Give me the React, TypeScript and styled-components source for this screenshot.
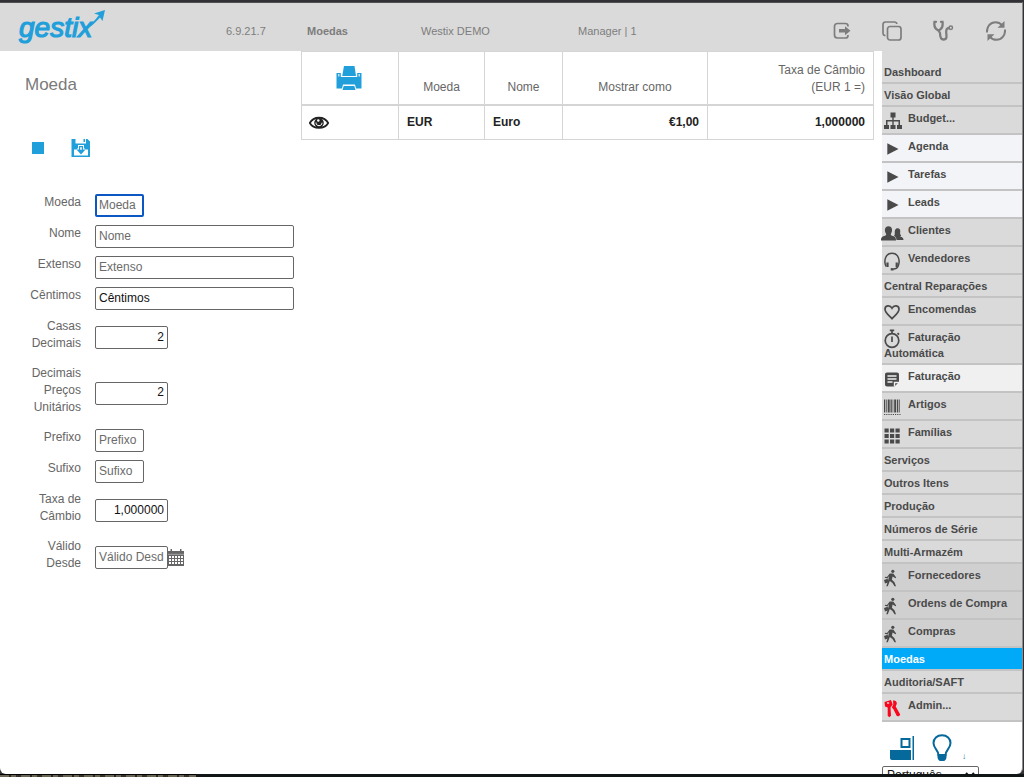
import React from "react";
import styled, { createGlobalStyle, css } from "styled-components";

const blue = "#209fda";
const line = "#d5d5d5";
const grey = "#dadada";
const ink = "#4a4a4a";

const GlobalStyle = createGlobalStyle`
  * { box-sizing: border-box; }
  body {
    margin: 0;
    background: #101212;
    font: 12px/17px "Liberation Sans", Arial, sans-serif;
    color: #666;
  }
`;

const Desktop = styled.div`
  display: flex;
  flex-direction: column;
  height: 100vh;
  padding-top: 2px;
  background: #323236;
`;

const WindowFrame = styled.div`
  flex: 1;
  min-height: 0;
  display: flex;
  flex-direction: column;
  overflow: hidden;
  background: #fff;
  border-top: 1px solid #505054;
  border-right: 1px solid #8c8c8c;
  margin-right: 1px;
  border-radius: 0 0 6px 6px;
`;

const Backdrop = styled.div`
  height: 3px;
  background: #121515;
  &::before {
    content: "";
    display: block;
    width: 196px;
    height: 3px;
    border-top: 1px solid #000;
    background: repeating-linear-gradient(90deg, #6a6653 0 9px, #2a2a22 9px 11px, #6a6653 11px 16px, #33322a 16px 21px);
  }
`;

const Header = styled.header`
  flex: none;
  height: 48px;
  display: grid;
  grid-template-columns: 226px 81px 114px 157px 1fr auto;
  align-items: center;
  padding-right: 16px;
  background: ${grey};
  color: #7d7d7d;
  font-size: 11px;
`;

const LogoLink = styled.a`
  display: block;
  height: 48px;
  padding-left: 16px;
`;

const HeaderText = styled.span<{ $strong?: boolean }>`
  padding-top: 8px;
  font-weight: ${(p) => (p.$strong ? 700 : 400)};
`;

const HeaderActions = styled.div`
  display: flex;
  gap: 31px;
  padding-top: 8px;
`;

const IconButton = styled.button`
  display: block;
  border: 0;
  padding: 0;
  background: none;
  color: inherit;
  svg { display: block; }
`;

const Body = styled.div`
  flex: 1;
  min-height: 0;
  display: grid;
  grid-template-columns: 301px minmax(0, 1fr) 140px;
`;

const FormPane = styled.section`
  padding: 23px 0 0 25px;
`;

const Title = styled.h1`
  margin: 0;
  font-size: 17px;
  line-height: 22px;
  font-weight: 400;
  color: #7a7a7a;
`;

const Toolbar = styled.div`
  display: flex;
  align-items: center;
  gap: 26px;
  height: 24px;
  margin: 40px 0 30px;
  padding-left: 6px;
  color: ${blue};
`;

const FormRow = styled.div`
  display: grid;
  grid-template-columns: 56px auto 1fr;
  align-items: center;
  min-height: 31px;
`;

const Label = styled.label`
  align-self: start;
  padding: 4px 0 9px;
  text-align: right;
`;

type FieldSize = "small" | "medium" | "wide";
const fieldWidth: Record<FieldSize, number> = { small: 49, medium: 73, wide: 199 };

const Field = styled.input<{ $size: FieldSize; $end?: boolean }>`
  width: ${(p) => fieldWidth[p.$size]}px;
  height: 23px;
  margin-left: 14px;
  padding: 0 3px 2px;
  border: 1px solid #666;
  border-radius: 2px;
  background: #fff;
  color: #111;
  font: inherit;
  text-align: ${(p) => (p.$end ? "right" : "left")};
  &::placeholder { color: #6b6b6b; opacity: 1; }
  &:focus {
    outline: 0;
    padding: 0 2px 2px;
    border: 2px solid #0b57c4;
    caret-color: transparent;
  }
`;

const TablePane = styled.section`
  padding-right: 8px;
`;

const Table = styled.table`
  width: 100%;
  table-layout: fixed;
  border-spacing: 0;
  border-top: 1px solid ${line};
  border-left: 1px solid ${line};
`;

const cell = css<{ $end?: boolean }>`
  border-right: 1px solid ${line};
  border-bottom: 1px solid ${line};
  text-align: ${(p) => (p.$end ? "right" : "left")};
`;

const HeadCell = styled.th<{ $end?: boolean }>`
  ${cell}
  height: 54px;
  padding: 10px 8px 8px;
  border-bottom-width: 2px;
  vertical-align: bottom;
  font-weight: 400;
  text-align: ${(p) => (p.$end ? "right" : "center")};
`;

const PrintCell = styled(HeadCell)`
  padding: 0 11px 0 8px;
  vertical-align: middle;
  button { margin: 0 auto; color: ${blue}; }
`;

const DataCell = styled.td<{ $end?: boolean }>`
  ${cell}
  height: 34px;
  padding: 0 8px;
  color: #222;
  font-weight: 700;
`;

const EyeCell = styled(DataCell)`
  padding: 0 7px;
`;

const Sidebar = styled.aside`
  min-width: 0;
`;

const Menu = styled.ul`
  margin: 0;
  padding: 10px 0 0;
  list-style: none;
  background: ${grey};
`;

type Tone = "plain" | "pale" | "light" | "dark" | "active";
const toneColor: Record<Tone, string> = {
  plain: grey,
  pale: "#f3f4f7",
  light: "#f0f0f0",
  dark: "#d0d0d0",
  active: "#00aaf9",
};

const MenuLink = styled.a<{ $tone: Tone; $tall: boolean }>`
  display: block;
  min-height: ${(p) => (p.$tall ? 28 : 23)}px;
  padding: 3px 2px 2px;
  border-bottom: 2px solid #c3c3c3;
  background: ${(p) => toneColor[p.$tone]};
  color: ${(p) => (p.$tone === "active" ? "#fff" : ink)};
  font-size: 11px;
  line-height: 16px;
  font-weight: 700;
  text-decoration: none;
`;

const MenuIcon = styled.span`
  display: inline-block;
  vertical-align: top;
  width: 24px;
  height: 16px;
  svg { display: block; margin-top: 2px; overflow: visible; }
`;

const SideFooter = styled.footer`
  padding-top: 12px;
`;

const FooterTools = styled.div`
  display: flex;
  align-items: center;
  gap: 18px;
  height: 27px;
  margin-bottom: 5px;
  padding-left: 8px;
  color: #06699b;
`;

const FooterNote = styled.span`
  align-self: flex-end;
  margin-left: -8px;
  font-size: 8px;
  line-height: 8px;
`;

const Language = styled.select`
  display: block;
  width: 97px;
  height: 18px;
  padding: 0;
  border: 1px solid #666;
  border-radius: 2px;
  background: #fff;
  color: #111;
  font: inherit;
`;

const Logo = () => (
  <svg width="94" height="48" viewBox="0 0 94 48" role="img" aria-label="gestix">
    <text x="3" y="34" fill={blue} stroke={blue} strokeWidth="1.2" fontFamily="Liberation Sans, Arial, sans-serif" fontSize="28" fontStyle="italic">gestix</text>
    <path d="M68 27C74 23 79 17 83 12l-5-1.500L89 7l-2.500 11-2.500-3.500C79 20 75 24 68 27z" fill={blue} />
  </svg>
);

const LogoutIcon = () => (
  <svg width="18" height="22" viewBox="0 0 18 22" fill="none" stroke="currentColor" strokeWidth="1.7">
    <path d="M15 6.500V6c0-1.500-1-2.500-2.500-2.500h-8C2.500 3.500 1.500 4.500 1.500 6.500v8.500c0 2 1 3 3 3h8c1.500 0 2.500-1 2.500-2.500V15" />
    <path d="M6 9h6V6.300l5.500 4.500-5.500 4.500v-2.700H6z" fill="currentColor" stroke="none" />
  </svg>
);

const CopyIcon = () => (
  <svg width="20" height="22" viewBox="0 0 20 22" fill="none" stroke="currentColor" strokeWidth="1.7">
    <rect x="5.500" y="6.500" width="13.500" height="13.500" rx="2.500" />
    <path d="M3.500 15.500C1.800 15.500 1 14.500 1 13V4.500C1 2.800 2 2 3.500 2h8.800c1.500 0 2.400.8 2.500 2" />
  </svg>
);

const StethoscopeIcon = () => (
  <svg width="22" height="22" viewBox="0 0 22 22" fill="none" stroke="currentColor" strokeWidth="2.300" strokeLinecap="round">
    <path d="M3 1.800H1.500C1 5 2 9 5.500 10.500 9 9 10 5 9.500 1.800H8" />
    <path d="M5.500 10.500L7 13c0 4 1.200 6.500 3.500 6.500 4 0 3-4 2.700-7C13 9.500 14 8 16 8" />
    <circle cx="17.800" cy="7.800" r="1.700" strokeWidth="1.500" />
  </svg>
);

const RefreshIcon = () => (
  <svg width="20" height="22" viewBox="0 0 20 22" fill="none" stroke="currentColor" strokeWidth="2">
    <path d="M1 12.500C.5 6.500 4.500 2.200 9.500 2.200c2.700 0 5 1.100 6.500 3M19 9.500c.5 6-3.500 10.300-8.500 10.300-2.700 0-5-1.100-6.500-3" />
    <path d="M18.500 1v6.800h-7zM1.500 21v-6.800h7z" fill="currentColor" stroke="none" />
  </svg>
);

const SaveIcon = () => (
  <svg width="20" height="20" viewBox="0 0 20 20">
    <path fill="currentColor" d="M.5 1h4v4.500h10.500V1h1.500L19 3.500V19H.5z" />
    <path fill="currentColor" d="M12.500 1H14v3h-1.500z" />
    <path fill="#fff" d="M3 11.500h2.500L7 10V7h6v3l1.500 1.500H17v6H3z" />
    <path fill="currentColor" d="M8 8h4v3.500h2.500L10 16.500l-4.500-5H8z" />
    <path fill="#fff" d="M9.200 9.200h1.600v2.500H9.200z" />
  </svg>
);

const StopIcon = () => (
  <svg width="14" height="20" viewBox="0 0 14 20"><path fill="currentColor" d="M1 4h12v12H1z" /></svg>
);

const PrinterIcon = () => (
  <svg width="26" height="24" viewBox="0 0 26 24" fill="currentColor">
    <path d="M.5 7h4.300v4h16.400V7h4.300v15.500H20l-1-4H7l-1 4H.5z" />
    <path d="M8 0h10.500L20 10H6.200z" />
    <path d="M7.700 20h10.600l1.200 4H6.500z" />
    <path fill="#fff" d="M2 8h1.500v2.500H2zM22.500 8H24v2.500h-1.500z" opacity=".7" />
  </svg>
);

const EyeIcon = () => (
  <svg width="20" height="14" viewBox="0 0 20 14">
    <path d="M.8 7C4.500 0 15.500 0 19.200 7 15.500 13.500 4.500 13.500.8 7z" fill="#fff" stroke="#222" strokeWidth="1.800" />
    <circle cx="10" cy="6.800" r="4.800" fill="#222" />
    <path d="M7 6.500c0 2 1.200 3.200 3 3.200s3-1.200 3-3" fill="none" stroke="#fff" />
    <circle cx="9.300" cy="4.500" r="1.200" fill="#fff" />
  </svg>
);

const CalendarIcon = () => (
  <svg width="16" height="17" viewBox="0 0 16 17" fill="#666">
    <path d="M0 2h2.500V0H4v2h8V0h1.500v2H16v15H0z" />
    <path stroke="#fff" strokeWidth="1.900" strokeDasharray="2 1" d="M1 8h14M1 11h14M1 14h14" />
    <path stroke="#fff" strokeWidth=".7" d="M0 5.300h16" opacity=".6" />
  </svg>
);

const icons: Record<string, React.ReactNode> = {
  tree: <path d="M6.500.5h5v5H9.700V8H16v5h2v4h-5v-4h1.500V9.500H9.700V13h1.800v4h-5v-4h1.800V9.500H3.500V13H5v4H0v-4h2V8h6.300V5.500H6.500z" />,
  arrow: <path d="M3.300 3.200l11.200 5.800-11.200 5.800z" />,
  people: (
    <>
      <path d="M13.500 4.200c2.300 0 3.200 2 2.700 4-.2 1-.2 2 .8 3 .5.500-.5 1-1 1.200 2.500.8 3.500 1.600 3.500 3.600h-7c0-2-1-3.500-2.500-4.300 1-1 .8-2 .7-3.500 0-2 .8-4 2.800-4z" />
      <path d="M12 16.500H-3c0-3 .8-3.800 4.500-5 .8-.4.800-1.100.5-1.700C.3 7 .3 2.300 4.500 2.300S8.700 7 7 9.800c-.3.600-.3 1.300.5 1.700 3.700 1.200 4.500 2 4.500 5z" />
    </>
  ),
  headset: (
    <g fill="none" stroke="currentColor" strokeWidth="1.500">
      <path d="M2 14.500C-.8 8 2 1.300 8 1.300S16.800 8 14 14.500c-.8 1.700-2 2.500-4.500 2.500" />
      <path strokeWidth="2.200" d="M3.500 10.500V15M12.700 10.500V15" />
      <path strokeWidth="2.300" d="M6.700 17.300h3" />
    </g>
  ),
  heart: <path fill="none" stroke="currentColor" strokeWidth="1.700" d="M8 15.700C4.500 12 1 9.500 1 6.200 1 2.500 5.800 1.300 8 5.200 10.200 1.300 15 2.500 15 6.200c0 3.300-3.500 5.800-7 9.500z" />,
  timer: (
    <g fill="none" stroke="currentColor" strokeWidth="1.700">
      <circle cx="8" cy="9.500" r="6.800" />
      <path d="M5.800-.7h4.400M8-1v3.500M8 5.500V11M13.500 2.200l1.500 1.500" />
    </g>
  ),
  note: (
    <>
      <path d="M3 2.500h10c1.200 0 2 .8 2 2v7.500L10.500 16.500H3c-1.200 0-2-.8-2-2v-10c0-1.200.8-2 2-2z" />
      <path fill="none" stroke="#f0f0f0" strokeWidth="1.400" d="M3.500 6h9M3.500 9h9M3.500 12h5M10.500 16.500v-4H15" />
    </>
  ),
  barcode: (
    <>
      <path fill="none" stroke="currentColor" strokeWidth="13" strokeDasharray="1.300 .8 .7 .9 2 .8" d="M0 8h16.500" />
      <path fill="none" stroke="currentColor" strokeDasharray="1.200 1" d="M0 16.500h16.500" />
    </>
  ),
  grid: <path d="M.5 2.500h4.200v4H.5zM6 2.500h4.200v4H6zM11.500 2.500h4.200v4h-4.200zM.5 8h4.200v4H.5zM6 8h4.200v4H6zM11.500 8h4.200v4h-4.200zM.5 13.500h4.200v4H.5zM6 13.500h4.200v4H6zM11.500 13.500h4.200v4h-4.200z" />,
  walker: (
    <>
      <circle cx="8.800" cy="2.300" r="1.600" />
      <path d="M5.700 4.500h3.500l3 4-.6.700-3-1.700-.7 3.200 2.600 2.500L12 17.300h-1.500l-2-3.300-2.700-2-2 5.300H2.300l2-6.600L5 7 3.500 9.500.8 8.700 1 7.800l2 .2z" />
      <path d="M0 11l3.700-1.200 1 3.400L1 14.500z" />
    </>
  ),
  keys: (
    <g fill="#f8071d">
      <path fillRule="evenodd" d="M.5 3L7 1l1.700 4.500L6.500 8.500l.5 8.300-1.700 1.500-1.600-1.500V8.500L1 7.500zM3 4.800h2.200V3.300H3z" />
      <path d="M9 1.500c2.500-.5 4 1 3.800 3.200L11.700 7.500l4.500 8-1.200 1.800-2.200-.3L9.300 10 7.800 8.500l1.500-3z" />
    </g>
  ),
};

const ScreenIcon = () => (
  <svg width="24" height="24" viewBox="0 0 24 24" fill="currentColor">
    <path d="M0 14h21v10H2c-1.200 0-2-.8-2-2zM22.500 0H24v24h-1.500z" />
    <path fill="none" stroke="currentColor" strokeWidth="2" d="M11.500 3h8v8h-8z" />
  </svg>
);

const BulbIcon = () => (
  <svg width="20" height="27" viewBox="0 0 20 27" fill="none" stroke="currentColor" strokeWidth="2">
    <path d="M6.500 21c0-5-5-6.500-5-12C1.500 4.500 5 1.300 10 1.300S18.500 4.500 18.500 9c0 5.500-5 7-5 12z" />
    <path fill="currentColor" stroke="none" d="M5.500 20h9v3c0 2-1.300 4-3 4h-3c-1.700 0-3-2-3-4z" />
  </svg>
);

interface MenuEntry { label: string; icon?: string; tone?: Tone }

const menu: MenuEntry[] = [
  { label: "Dashboard" },
  { label: "Visão Global" },
  { label: "Budget...", icon: "tree" },
  { label: "Agenda", icon: "arrow", tone: "pale" },
  { label: "Tarefas", icon: "arrow", tone: "pale" },
  { label: "Leads", icon: "arrow", tone: "pale" },
  { label: "Clientes", icon: "people" },
  { label: "Vendedores", icon: "headset" },
  { label: "Central Reparações" },
  { label: "Encomendas", icon: "heart" },
  { label: "Faturação Automática", icon: "timer" },
  { label: "Faturação", icon: "note", tone: "light" },
  { label: "Artigos", icon: "barcode" },
  { label: "Famílias", icon: "grid" },
  { label: "Serviços" },
  { label: "Outros Itens" },
  { label: "Produção" },
  { label: "Números de Série" },
  { label: "Multi-Armazém" },
  { label: "Fornecedores", icon: "walker", tone: "dark" },
  { label: "Ordens de Compra", icon: "walker", tone: "dark" },
  { label: "Compras", icon: "walker", tone: "dark" },
  { label: "Moedas", tone: "active" },
  { label: "Auditoria/SAFT" },
  { label: "Admin...", icon: "keys" },
];

interface FieldEntry { id: string; label: string; size: FieldSize; placeholder?: string; value?: string; end?: boolean; calendar?: boolean }

const fields: FieldEntry[] = [
  { id: "moeda", label: "Moeda", size: "small", placeholder: "Moeda" },
  { id: "nome", label: "Nome", size: "wide", placeholder: "Nome" },
  { id: "extenso", label: "Extenso", size: "wide", placeholder: "Extenso" },
  { id: "centimos", label: "Cêntimos", size: "wide", value: "Cêntimos" },
  { id: "casas", label: "Casas Decimais", size: "medium", value: "2", end: true },
  { id: "precos", label: "Decimais Preços Unitários", size: "medium", value: "2", end: true },
  { id: "prefixo", label: "Prefixo", size: "small", placeholder: "Prefixo" },
  { id: "sufixo", label: "Sufixo", size: "small", placeholder: "Sufixo" },
  { id: "taxa", label: "Taxa de Câmbio", size: "medium", value: "1,000000", end: true },
  { id: "valido", label: "Válido Desde", size: "medium", placeholder: "Válido Desde", calendar: true },
];

export default function App() {
  return (
    <Desktop>
      <GlobalStyle />
      <WindowFrame>
        <Header>
          <LogoLink href="#"><Logo /></LogoLink>
          <HeaderText>6.9.21.7</HeaderText>
          <HeaderText $strong>Moedas</HeaderText>
          <HeaderText>Westix DEMO</HeaderText>
          <HeaderText>Manager | 1</HeaderText>
          <HeaderActions>
            <IconButton aria-label="Sair"><LogoutIcon /></IconButton>
            <IconButton aria-label="Duplicar"><CopyIcon /></IconButton>
            <IconButton aria-label="Diagnóstico"><StethoscopeIcon /></IconButton>
            <IconButton aria-label="Atualizar"><RefreshIcon /></IconButton>
          </HeaderActions>
        </Header>
        <Body>
          <FormPane>
            <Title>Moeda</Title>
            <Toolbar>
              <IconButton aria-label="Novo"><StopIcon /></IconButton>
              <IconButton aria-label="Gravar"><SaveIcon /></IconButton>
            </Toolbar>
            <form>
              {fields.map((f) => (
                <FormRow key={f.id}>
                  <Label htmlFor={f.id}>{f.label}</Label>
                  <Field
                    id={f.id}
                    type="text"
                    $size={f.size}
                    $end={f.end}
                    placeholder={f.placeholder}
                    defaultValue={f.value}
                    autoFocus={f.id === "moeda"}
                  />
                  {f.calendar && (
                    <IconButton type="button" aria-label="Escolher data"><CalendarIcon /></IconButton>
                  )}
                </FormRow>
              ))}
            </form>
          </FormPane>
          <TablePane>
            <Table>
              <colgroup>
                <col width="97" /><col width="86" /><col width="78" /><col width="145" /><col width="166" />
              </colgroup>
              <thead>
                <tr>
                  <PrintCell><IconButton aria-label="Imprimir"><PrinterIcon /></IconButton></PrintCell>
                  <HeadCell>Moeda</HeadCell>
                  <HeadCell>Nome</HeadCell>
                  <HeadCell>Mostrar como</HeadCell>
                  <HeadCell $end>Taxa de Câmbio<br />(EUR 1 =)</HeadCell>
                </tr>
              </thead>
              <tbody>
                <tr>
                  <EyeCell><IconButton aria-label="Ver"><EyeIcon /></IconButton></EyeCell>
                  <DataCell>EUR</DataCell>
                  <DataCell>Euro</DataCell>
                  <DataCell $end>€1,00</DataCell>
                  <DataCell $end>1,000000</DataCell>
                </tr>
              </tbody>
            </Table>
          </TablePane>
          <Sidebar>
            <nav>
              <Menu>
                {menu.map((m) => (
                  <li key={m.label}>
                    <MenuLink href="#" $tone={m.tone ?? "plain"} $tall={!!m.icon}>
                      {m.icon && (
                        <MenuIcon>
                          <svg width="18" height="18" viewBox="0 0 18 18" fill="currentColor">{icons[m.icon]}</svg>
                        </MenuIcon>
                      )}
                      {m.label}
                    </MenuLink>
                  </li>
                ))}
              </Menu>
            </nav>
            <SideFooter>
              <FooterTools>
                <IconButton aria-label="Ecrã"><ScreenIcon /></IconButton>
                <IconButton aria-label="Ajuda"><BulbIcon /></IconButton>
                <FooterNote>↓</FooterNote>
              </FooterTools>
              <Language aria-label="Idioma">
                <option>Português</option>
              </Language>
            </SideFooter>
          </Sidebar>
        </Body>
      </WindowFrame>
      <Backdrop />
    </Desktop>
  );
}
